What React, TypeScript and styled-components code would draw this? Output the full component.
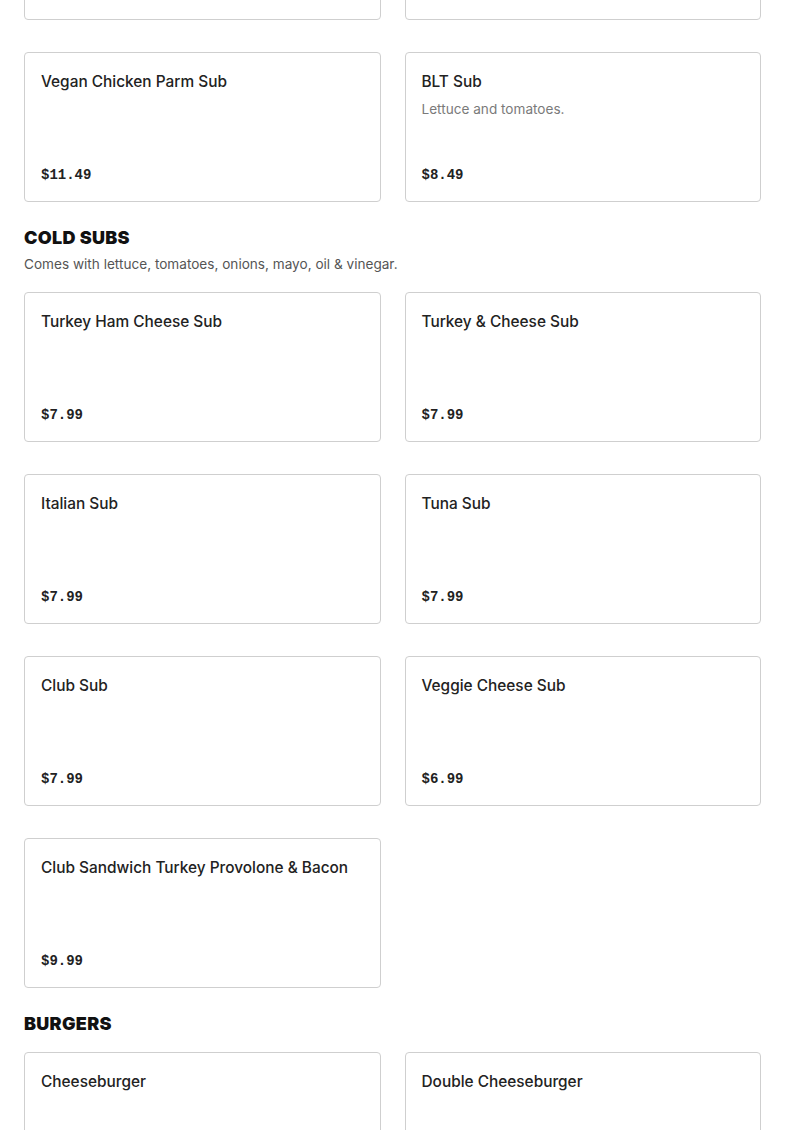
import React from "react";
import styled, {createGlobalStyle} from "styled-components";

type Item = {name: string, desc?: string, price: string}
type Section = {title?: string, note?: string, items: Item[]}

const sections: Section[] = [
    {
        items: [
            {name: "Chicken Parm Sub", price: "$9.99"},
            {name: "Meatball Parm Sub", price: "$9.99"},
            {name: "Vegan Chicken Parm Sub", price: "$11.49"},
            {name: "BLT Sub", desc: "Lettuce and tomatoes.", price: "$8.49"},
        ]
    },
    {
        title: "COLD SUBS",
        note: "Comes with lettuce, tomatoes, onions, mayo, oil & vinegar.",
        items: [
            {name: "Turkey Ham Cheese Sub", price: "$7.99"},
            {name: "Turkey & Cheese Sub", price: "$7.99"},
            {name: "Italian Sub", price: "$7.99"},
            {name: "Tuna Sub", price: "$7.99"},
            {name: "Club Sub", price: "$7.99"},
            {name: "Veggie Cheese Sub", price: "$6.99"},
            {name: "Club Sandwich Turkey Provolone & Bacon", price: "$9.99"},
        ]
    },
    {
        title: "BURGERS",
        items: [
            {name: "Cheeseburger", price: "$6.99"},
            {name: "Double Cheeseburger", price: "$9.99"},
        ]
    },
]

const App = () => {
    return <Page>
        <GlobalStyle />
        {sections.map((s, i) => (
            <SectionBlock key={i}>
                {s.title && <Header hasNote={!!s.note}>
                    <Title>{s.title}</Title>
                    {s.note && <Note>{s.note}</Note>}
                </Header>}
                <Grid>
                    {s.items.map(item => (
                        <Card key={item.name}>
                            <Name>{item.name}</Name>
                            {item.desc && <Desc>{item.desc}</Desc>}
                            <Price>{item.price}</Price>
                        </Card>
                    ))}
                </Grid>
            </SectionBlock>
        ))}
    </Page>
}

export default App;

const GlobalStyle = createGlobalStyle `
    body {
        margin: 0;
        background: #fff;
        font-family: Inter, "Noto Sans", sans-serif;
        color: #1f1f1f;
        overflow: hidden;
    }
`

// the page is scrolled: the first menu rows sit partly above the window
const Page = styled.main `
    margin-top: -130px;
    padding: 0 24px;
    display: flex;
    flex-direction: column;
    gap: 24px;
`

const SectionBlock = styled.section `
    display: flex;
    flex-direction: column;
`

const Header = styled.header < {
    hasNote: boolean
} > `
    display: flex;
    flex-direction: column;
    gap: 4px;
    margin-bottom: ${props => props.hasNote ? "18px" : "16px"};
`

const Title = styled.h2 `
    margin: 0;
    font-size: 18px;
    line-height: 24px;
    font-weight: 900;
    letter-spacing: 0.3px;
    color: #111;
`

const Note = styled.p `
    margin: 0;
    font-size: 13.6px;
    line-height: 20px;
    color: #555;
`

const Grid = styled.div `
    display: grid;
    grid-template-columns: 1fr 1fr;
    column-gap: 24px;
    row-gap: 32px;
`

const Card = styled.article `
    height: 150px;
    box-sizing: border-box;
    border: 1px solid #cfcfcf;
    border-radius: 4px;
    padding: 17px 16px 15px;
    display: flex;
    flex-direction: column;
`

const Name = styled.h3 `
    margin: 0;
    font-size: 15.4px;
    line-height: 24px;
    font-weight: 500;
    color: #222;
`

const Desc = styled.p `
    margin: 5px 0 0;
    font-size: 13.6px;
    line-height: 20px;
    color: #7a7a7a;
`

const Price = styled.span `
    margin-top: auto;
    font-family: "Liberation Mono", "DejaVu Sans Mono", monospace;
    font-size: 14px;
    line-height: 22px;
    font-weight: 700;
    color: #222;
`
